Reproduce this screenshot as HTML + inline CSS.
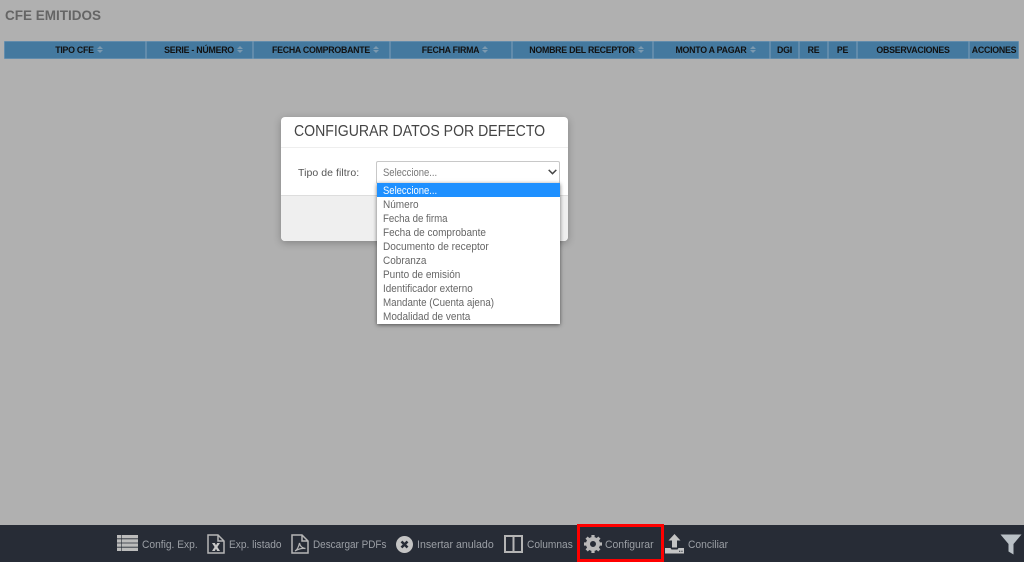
<!DOCTYPE html>
<html lang="es"><head><meta charset="utf-8"><title>CFE Emitidos</title>
<style>
html,body{margin:0;padding:0}
body{width:1024px;height:562px;overflow:hidden;position:relative;background:#b0b0b0;font-family:"Liberation Sans",sans-serif}
.a{position:absolute;white-space:nowrap}
.th{position:absolute;top:41px;height:18px;box-sizing:border-box;background:#44799f;box-shadow:inset 0 0 0 .5px #7fa0b8;font-weight:bold;font-size:8.8px;letter-spacing:-.25px;line-height:18px;color:#111;text-align:center;white-space:nowrap}
.s{padding-left:8px}
.th i{display:inline-block;width:6px;height:8px;margin-left:3px;vertical-align:-1px;position:relative}
.th i:before{content:"";position:absolute;left:0;top:0;border:3px solid transparent;border-top:0;border-bottom:3px solid #7c9ab0}
.th i:after{content:"";position:absolute;left:0;top:4px;border:3px solid transparent;border-bottom:0;border-top:3px solid #7c9ab0}
.opt{position:absolute;left:6px;height:14px;line-height:14px;font-size:11px;color:#666;white-space:nowrap;transform-origin:left center}
.lbl{position:absolute;top:538px;font-size:11.3px;line-height:14px;color:#9b9fa5;white-space:nowrap;transform-origin:left center}
svg{position:absolute;overflow:visible}
</style></head><body>
<div class="a" style="left:5px;top:7.500px;font-size:13.5px;line-height:16px;font-weight:bold;color:#656565">CFE EMITIDOS</div>

<div class="th s" style="left:4px;width:142px">TIPO CFE<i></i></div>
<div class="th s" style="left:146px;width:107px">SERIE - NÚMERO<i></i></div>
<div class="th s" style="left:253px;width:137px">FECHA COMPROBANTE<i></i></div>
<div class="th s" style="left:390px;width:122px">FECHA FIRMA<i></i></div>
<div class="th s" style="left:512px;width:141px">NOMBRE DEL RECEPTOR<i></i></div>
<div class="th s" style="left:653px;width:117px">MONTO A PAGAR<i></i></div>
<div class="th" style="left:770px;width:29px">DGI</div>
<div class="th" style="left:799px;width:29px">RE</div>
<div class="th" style="left:828px;width:29px">PE</div>
<div class="th" style="left:857px;width:112px">OBSERVACIONES</div>
<div class="th" style="left:969px;width:50px">ACCIONES</div>

<!-- modal -->
<div class="a" style="left:281px;top:117px;width:287px;height:124px;background:#fff;border-radius:4px;box-shadow:0 2px 8px rgba(0,0,0,.25);overflow:hidden">
  <div class="a" style="left:13px;top:5px;font-size:16px;line-height:20px;color:#444;transform:scaleX(.88);transform-origin:left center">CONFIGURAR DATOS POR DEFECTO</div>
  <div class="a" style="left:0;top:30px;width:287px;height:1px;background:#eee"></div>
  <div class="a" style="left:17px;top:49px;font-size:10.5px;line-height:14px;color:#555;letter-spacing:.06px">Tipo de filtro:</div>
  <div class="a" style="left:0;top:78px;width:287px;height:46px;background:#efefef;border-top:1px solid #ddd;box-sizing:border-box"></div>
</div>
<!-- select -->
<div class="a" style="left:376px;top:161px;width:184px;height:23px;box-sizing:border-box;background:#fff;border:1px solid #c8c8c8;border-radius:2px">
  <div class="a" style="left:6px;top:4px;font-size:11px;line-height:14px;color:#777;transform:scaleX(.86);transform-origin:left center">Seleccione...</div>
  <svg style="left:171px;top:7px" width="9" height="6" viewBox="0 0 9 6"><path d="M.7.9 4.5 4.7 8.3.9" fill="none" stroke="#444" stroke-width="1.5"/></svg>
</div>
<!-- dropdown -->
<div class="a" style="left:377px;top:183px;width:183px;height:141px;background:#fff;box-shadow:0 1px 4px rgba(0,0,0,.55)">
  <div class="a" style="left:0;top:0;width:183px;height:14px;background:#1e90ff"></div>
  <div class="opt" style="top:1px;color:#fff;transform:scaleX(.86)">Seleccione...</div>
  <div class="opt" style="top:15px;transform:scaleX(.91)">Número</div>
  <div class="opt" style="top:29px;transform:scaleX(.88)">Fecha de firma</div>
  <div class="opt" style="top:43px;transform:scaleX(.91)">Fecha de comprobante</div>
  <div class="opt" style="top:57px;transform:scaleX(.92)">Documento de receptor</div>
  <div class="opt" style="top:71px;transform:scaleX(.91)">Cobranza</div>
  <div class="opt" style="top:85px;transform:scaleX(.91)">Punto de emisión</div>
  <div class="opt" style="top:99px;transform:scaleX(.9)">Identificador externo</div>
  <div class="opt" style="top:113px;transform:scaleX(.89)">Mandante (Cuenta ajena)</div>
  <div class="opt" style="top:127px;transform:scaleX(.91)">Modalidad de venta</div>
</div>

<!-- bottom bar -->
<div class="a" style="left:0;top:525px;width:1024px;height:37px;background:#272c36"></div>

<svg style="left:117px;top:535px" width="21" height="16" viewBox="0 0 21 16"><path d="M0 0h21v3.400H0zM0 4.200h21v3.400H0zM0 8.400h21v3.400H0zM0 12.600h21v3.400H0z" fill="#bcbcbc"/><path d="M4.500 0v16" stroke="#272c36" stroke-width=".6"/></svg>
<div class="lbl" style="left:142px;transform:scaleX(.905)">Config. Exp.</div>

<svg style="left:207px;top:534px" width="18" height="20" viewBox="0 0 18 20"><path d="M1 1h10l6 6v12H1zM11 1v6h6" fill="none" stroke="#b5b5b5" stroke-width="1.5"/><path d="M5 9h2.800L9 11.200 10.200 9H13l-2.600 4 2.600 4h-2.800L9 14.800 7.800 17H5l2.600-4z" fill="#c8c8c8"/></svg>
<div class="lbl" style="left:229px;transform:scaleX(.9)">Exp. listado</div>

<svg style="left:291px;top:534px" width="18" height="20" viewBox="0 0 18 20"><path d="M1 1h10l6 6v12H1zM11 1v6h6" fill="none" stroke="#b5b5b5" stroke-width="1.5"/><path d="M4 17c2-1 3.500-3.500 4.500-8 .5 3 2.500 5 6 5.500-3.500-.5-7 .5-10.500 2.500z" fill="none" stroke="#b5b5b5" stroke-width="1.200"/></svg>
<div class="lbl" style="left:313px;transform:scaleX(.88)">Descargar PDFs</div>

<svg style="left:396px;top:536px" width="17" height="17" viewBox="0 0 17 17"><circle cx="8.500" cy="8.500" r="8.500" fill="#c4c4c4"/><path d="M5.500 5.500l6 6M11.500 5.500l-6 6" stroke="#272c36" stroke-width="2.600"/></svg>
<div class="lbl" style="left:417px;transform:scaleX(.94)">Insertar anulado</div>

<svg style="left:504px;top:535px" width="19" height="18" viewBox="0 0 19 18"><path d="M1 1h17v16H1zM9.500 1v16" fill="none" stroke="#b5b5b5" stroke-width="2"/></svg>
<div class="lbl" style="left:527px;transform:scaleX(.9)">Columnas</div>

<svg style="left:584px;top:535px" width="18" height="18" viewBox="0 0 18 18"><circle cx="9" cy="9" r="5" fill="none" stroke="#b8b8b8" stroke-width="4"/><path d="M9 0v18M0 9h18M2.600 2.600l12.800 12.800M15.400 2.600 2.600 15.400" stroke="#b8b8b8" stroke-width="3.200" stroke-dasharray="3.500 11 3.500"/></svg>
<div class="lbl" style="left:605px;transform:scaleX(.92)">Configurar</div>

<svg style="left:665px;top:534px" width="19" height="20" viewBox="0 0 19 20"><path d="M9.500 0l6 6.500h-3.500v7h-5v-7H3.500z" fill="#c4c4c4"/><path d="M0 14h5.500l1 1.500h6l1-1.500H19v5.500H0z" fill="#c4c4c4"/><path d="M14 17.300h1.300M16.300 17.300h1.300" stroke="#272c36"/></svg>
<div class="lbl" style="left:688px;transform:scaleX(.91)">Conciliar</div>

<svg style="left:1000px;top:534px" width="22" height="21" viewBox="0 0 22 21"><path d="M.500.500h21L13.500 10v10.500l-5-3V10z" fill="#b9c0c6"/></svg>

<div class="a" style="left:577px;top:524px;width:87px;height:37.500px;box-sizing:border-box;border:3.500px solid #f00"></div>
</body></html>
